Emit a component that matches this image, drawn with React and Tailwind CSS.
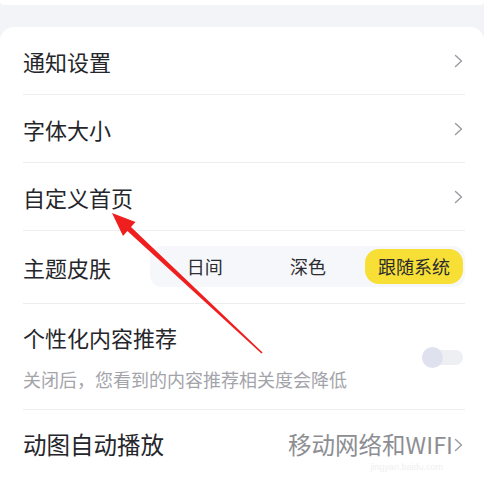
import React from "react";

const font = { fontFamily: '"Noto Sans CJK SC", "Noto Sans", sans-serif' };

function Chevron() {
  return (
    <svg width="9" height="14" viewBox="0 0 9 14" className="shrink-0">
      <path d="M1.5 1.5 L7.5 7 L1.5 12.5" fill="none" stroke="#9a9aa0" strokeWidth="1.4" strokeLinecap="round" strokeLinejoin="round" />
    </svg>
  );
}

function NavRow({ label }) {
  return (
    <div className="h-[68px] flex items-center justify-between border-b border-[#ededef] pr-[2px]">
      <span className="text-[22px] text-[#25262b] leading-none">{label}</span>
      <Chevron />
    </div>
  );
}

export default function App() {
  return (
    <div className="relative w-[484px] h-[478px] overflow-hidden bg-[#f3f4f7]" style={font}>
      <div className="h-[5px] bg-white rounded-b-[4px]" />
      <div className="mt-[22px] bg-white rounded-t-[14px] pl-[23px] pr-[19px] h-[451px]">
        <NavRow label="通知设置" />
        <NavRow label="字体大小" />
        <NavRow label="自定义首页" />
        <div className="h-[73px] flex items-center border-b border-[#ededef]">
          <span className="text-[22px] text-[#25262b] leading-none w-[127px] shrink-0">主题皮肤</span>
          <div className="flex-1 h-[41px] bg-[#f6f7fa] rounded-[12px] grid grid-cols-3 items-center py-[3px] pl-[3px] pr-[2px] -mt-[2px]">
            <div className="text-center text-[18px] text-[#2b2c30] leading-none">日间</div>
            <div className="text-center text-[18px] text-[#2b2c30] leading-none">深色</div>
            <div className="justify-self-end w-[98px] h-[35px] bg-[#f7df35] rounded-[14px] flex items-center justify-center text-[18px] text-[#2b2c30] leading-none">跟随系统</div>
          </div>
        </div>
        <div className="h-[106px] relative border-b border-[#ededef]">
          <div className="pt-[22px] text-[22px] text-[#25262b] leading-none">个性化内容推荐</div>
          <div className="mt-[22px] text-[18px] text-[#a3a4aa] leading-none">关闭后，您看到的内容推荐相关度会降低</div>
          <div className="absolute right-[2px] top-[43px] w-[41px] h-[21px] flex items-center">
            <div className="absolute left-0 right-0 h-[15px] rounded-full bg-[#eeeff2]" />
            <div className="absolute left-0 w-[21px] h-[21px] rounded-full bg-[#dfe1ee]" />
          </div>
        </div>
        <div className="h-[70px] flex items-center justify-between pr-[2px] relative">
          <span className="text-[23.5px] text-[#25262b] leading-none">动图自动播放</span>
          <div className="flex items-center gap-[1px]">
            <span className="text-[23.5px] text-[#8d8e93] leading-none">移动网络和WIFI</span>
            <Chevron />
          </div>
          <span className="absolute right-[22px] bottom-[8px] text-[9px] text-[#efefef] leading-none" style={{ fontFamily: '"Liberation Sans", sans-serif' }}>jingyan.baidu.com</span>
        </div>
      </div>
      <svg className="absolute left-0 top-0 pointer-events-none" width="484" height="478" viewBox="0 0 484 478">
        <polygon
          points="112,213 135.5,222 131,227 262.6,352.4 261.4,353.6 127.4,231 123,236"
          fill="#f01f1f"
        />
      </svg>
    </div>
  );
}
